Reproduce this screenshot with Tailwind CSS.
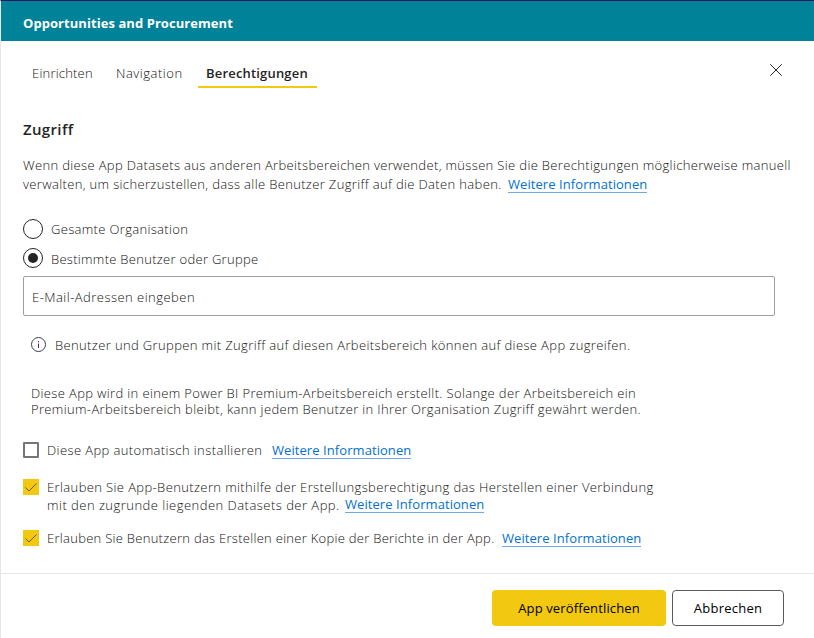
<!DOCTYPE html>
<html lang="de">
<head>
<meta charset="utf-8">
<title>Opportunities and Procurement</title>
<script src="https://cdn.jsdelivr.net/npm/@tailwindcss/browser@4"></script>
</head>
<body class="w-[814px] h-[638px] overflow-hidden bg-white">
<main class="flex h-[638px] w-[814px] flex-col border-l border-l-[#e6e6e6] border-t border-t-[#32145a] bg-white font-['Open_Sans','Noto_Sans',sans-serif] text-[13px] font-light whitespace-nowrap text-[#111]">
  <header class="flex h-10 items-center bg-[#008299] pl-[22px] pt-[5px] font-bold tracking-[0.06px] text-white"><span>Opportunities and Procurement</span></header>
  <div class="flex h-[47px] items-stretch justify-between">
    <nav class="flex pl-[23px]">
      <a class="flex w-[77px] items-center pl-2 pt-[18px] tracking-[0.2px]"><span>Einrichten</span></a>
      <a class="flex w-[97px] items-center pl-[15px] pt-[18px] tracking-[0.53px]"><span>Navigation</span></a>
      <a class="flex w-[119px] items-center border-b-2 border-[#f2c811] pl-2 pt-5 font-semibold tracking-[0.18px] text-[#252423]"><span>Berechtigungen</span></a>
    </nav>
    <button class="mr-8 mt-[23px] h-3 w-3" aria-label="Schließen"><svg class="h-3 w-3" viewBox="0 0 12 12" stroke="#252423" fill="none"><path d="M.3.3l11.4 11.4M11.7.3L.3 11.7"/></svg></button>
  </div>
  <section class="flex h-[485px] flex-col pl-[22px] pt-[29px]">
    <h1 class="flex h-6 items-center text-[15px] font-semibold tracking-[0.35px] text-[#252423]"><span>Zugriff</span></h1>
    <p class="mt-[15px] flex h-[19px] items-center tracking-[0.345px]"><span>Wenn diese App Datasets aus anderen Arbeitsbereichen verwendet, müssen Sie die Berechtigungen möglicherweise manuell</span></p>
    <p class="flex h-[19px] items-center tracking-[0.35px]"><span class="w-[485px]">verwalten, um sicherzustellen, dass alle Benutzer Zugriff auf die Daten haben.</span><a class="h-[18px] self-start border-b border-[#71a7e6] font-normal leading-[19px] tracking-[0.07px] text-[#0072d0]">Weitere Informationen</a></p>
    <label class="mt-[25px] flex h-5 items-center gap-2 tracking-[0.33px]"><i class="h-5 w-5 rounded-full border border-[#252423]"></i><span class="pt-0.5">Gesamte Organisation</span></label>
    <label class="mt-[9px] flex h-5 items-center gap-2 tracking-[0.29px]"><i class="flex h-5 w-5 items-center justify-center rounded-full border border-[#252423]"><b class="h-2.5 w-2.5 rounded-full bg-[#252423]"></b></i><span class="pt-[3px]">Bestimmte Benutzer oder Gruppe</span></label>
    <div class="mt-2 flex h-10 w-[752px] items-center rounded-[2px] border border-[#a19f9d] pl-2 pt-[3px] tracking-[0.47px]"><span>E-Mail-Adressen eingeben</span></div>
    <p class="mt-5 flex h-[18px] items-center pl-2 tracking-[0.37px]">
      <svg class="mr-[9px] -mt-0.5 h-[15px] w-[15px]" viewBox="0 0 15 15" fill="none" stroke="#3b3a5c"><circle cx="7.5" cy="7.5" r="7"/><path d="M7.5 6.5V11M7.5 4v1.2" stroke="#5c2470"/></svg>
      <span class="pt-0.5">Benutzer und Gruppen mit Zugriff auf diesen Arbeitsbereich können auf diese App zugreifen.</span></p>
    <p class="mt-[31px] h-8 pl-2 leading-4 tracking-[0.355px]">Diese App wird in einem Power BI Premium-Arbeitsbereich erstellt. Solange der Arbeitsbereich ein<br>Premium-Arbeitsbereich bleibt, kann jedem Benutzer in Ihrer Organisation Zugriff gewährt werden.</p>
    <div class="mt-6 flex h-[18px] items-center tracking-[0.4px]">
      <i class="mr-2 h-4 w-4 rounded-[1px] border-2 border-[#767676]"></i>
      <span class="w-[225px] pt-px">Diese App automatisch installieren</span>
      <a class="h-[18px] border-b border-[#71a7e6] font-normal leading-[19px] tracking-[0.07px] text-[#0072d0]">Weitere Informationen</a>
    </div>
    <div class="mt-[19px] flex h-9">
      <i class="mr-2 mt-px flex h-4 w-4 bg-[#f2c811]"><svg class="h-4 w-4" viewBox="0 0 16 16" fill="none" stroke="#6b5a17"><path d="M2.5 8.5l3.5 3.5 7.5-7.5"/></svg></i>
      <div class="leading-[18px]">
        <p class="h-[18px] tracking-[0.378px]"><span>Erlauben Sie App-Benutzern mithilfe der Erstellungsberechtigung das Herstellen einer Verbindung</span></p>
        <p class="flex h-[18px] tracking-[0.477px]"><span class="w-[298px]">mit den zugrunde liegenden Datasets der App.</span><a class="-mt-px h-[18px] border-b border-[#71a7e6] font-normal leading-[19px] tracking-[0.07px] text-[#0072d0]">Weitere Informationen</a></p>
      </div>
    </div>
    <div class="mt-[15px] flex h-[18px] items-center tracking-[0.28px]">
      <i class="mr-2 h-4 w-4 bg-[#f2c811]"><svg class="h-4 w-4" viewBox="0 0 16 16" fill="none" stroke="#6b5a17"><path d="M2.5 8.5l3.5 3.5 7.5-7.5"/></svg></i>
      <span class="w-[455px] pt-px">Erlauben Sie Benutzern das Erstellen einer Kopie der Berichte in der App.</span>
      <a class="h-[18px] border-b border-[#71a7e6] font-normal leading-[19px] tracking-[0.07px] text-[#0072d0]">Weitere Informationen</a>
    </div>
  </section>
  <footer class="flex h-[65px] justify-end gap-1.5 border-t border-[#e6e6e6] pr-[30px] pt-4 font-medium text-black">
    <button class="h-9 w-[174px] rounded-[4px] bg-[#f2c811] pt-0.5 tracking-[0.13px]"><span>App veröffentlichen</span></button>
    <button class="h-9 w-28 rounded-[4px] border border-[#5c5b5a] pt-0.5 tracking-[0.25px]"><span>Abbrechen</span></button>
  </footer>
</main>
</body>
</html>
